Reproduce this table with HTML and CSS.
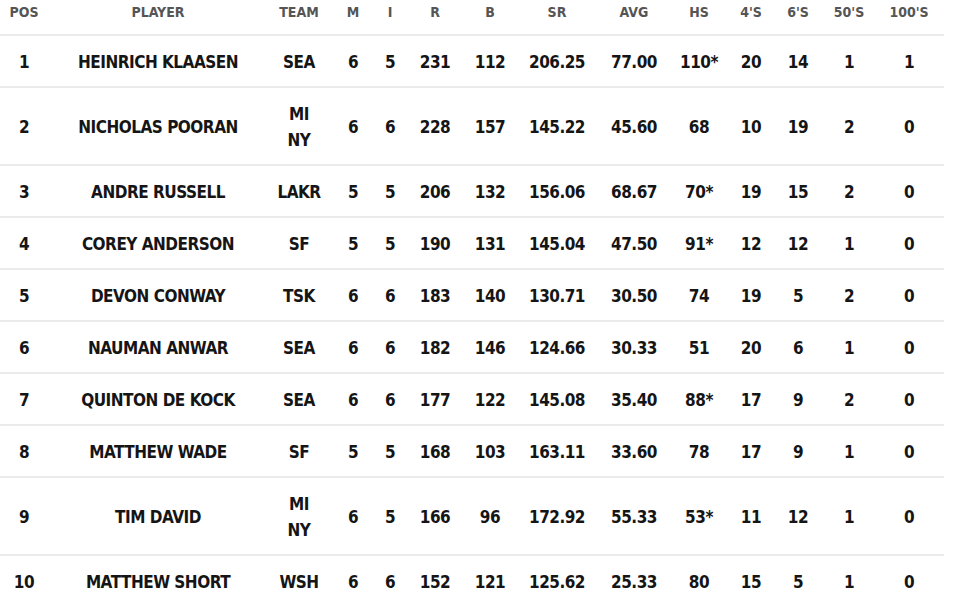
FILE: index.html
```html
<!DOCTYPE html>
<html>
<head>
<meta charset="utf-8">
<link rel="stylesheet" href="styles.css">
</head>
<body>
<table class="stats">
  <colgroup>
    <col class="c-pos"><col class="c-player"><col class="c-team"><col class="c-m"><col class="c-i"><col class="c-r"><col class="c-b"><col class="c-sr"><col class="c-avg"><col class="c-hs"><col class="c-4s"><col class="c-6s"><col class="c-50s"><col class="c-100s">
  </colgroup>
  <thead>
    <tr><th>POS</th><th>PLAYER</th><th>TEAM</th><th>M</th><th>I</th><th>R</th><th>B</th><th>SR</th><th>AVG</th><th>HS</th><th>4'S</th><th>6'S</th><th>50'S</th><th>100'S</th></tr>
  </thead>
  <tbody>
    <tr><td>1</td><td>HEINRICH KLAASEN</td><td>SEA</td><td>6</td><td>5</td><td>231</td><td>112</td><td>206.25</td><td>77.00</td><td>110*</td><td>20</td><td>14</td><td>1</td><td>1</td></tr>
    <tr><td>2</td><td>NICHOLAS POORAN</td><td>MI<br>NY</td><td>6</td><td>6</td><td>228</td><td>157</td><td>145.22</td><td>45.60</td><td>68</td><td>10</td><td>19</td><td>2</td><td>0</td></tr>
    <tr><td>3</td><td>ANDRE RUSSELL</td><td>LAKR</td><td>5</td><td>5</td><td>206</td><td>132</td><td>156.06</td><td>68.67</td><td>70*</td><td>19</td><td>15</td><td>2</td><td>0</td></tr>
    <tr><td>4</td><td>COREY ANDERSON</td><td>SF</td><td>5</td><td>5</td><td>190</td><td>131</td><td>145.04</td><td>47.50</td><td>91*</td><td>12</td><td>12</td><td>1</td><td>0</td></tr>
    <tr><td>5</td><td>DEVON CONWAY</td><td>TSK</td><td>6</td><td>6</td><td>183</td><td>140</td><td>130.71</td><td>30.50</td><td>74</td><td>19</td><td>5</td><td>2</td><td>0</td></tr>
    <tr><td>6</td><td>NAUMAN ANWAR</td><td>SEA</td><td>6</td><td>6</td><td>182</td><td>146</td><td>124.66</td><td>30.33</td><td>51</td><td>20</td><td>6</td><td>1</td><td>0</td></tr>
    <tr><td>7</td><td>QUINTON DE KOCK</td><td>SEA</td><td>6</td><td>6</td><td>177</td><td>122</td><td>145.08</td><td>35.40</td><td>88*</td><td>17</td><td>9</td><td>2</td><td>0</td></tr>
    <tr><td>8</td><td>MATTHEW WADE</td><td>SF</td><td>5</td><td>5</td><td>168</td><td>103</td><td>163.11</td><td>33.60</td><td>78</td><td>17</td><td>9</td><td>1</td><td>0</td></tr>
    <tr><td>9</td><td>TIM DAVID</td><td>MI<br>NY</td><td>6</td><td>5</td><td>166</td><td>96</td><td>172.92</td><td>55.33</td><td>53*</td><td>11</td><td>12</td><td>1</td><td>0</td></tr>
    <tr><td>10</td><td>MATTHEW SHORT</td><td>WSH</td><td>6</td><td>6</td><td>152</td><td>121</td><td>125.62</td><td>25.33</td><td>80</td><td>15</td><td>5</td><td>1</td><td>0</td></tr>
  </tbody>
</table>
</body>
</html>
```

FILE: styles.css
```css
html, body {
  margin: 0;
  padding: 0;
  background: #ffffff;
}
.stats {
  border-collapse: collapse;
  table-layout: fixed;
  width: 944px;
  font-family: "DejaVu Sans Condensed", "DejaVu Sans", sans-serif;
  font-weight: bold;
}
.c-pos { width: 48px; }
.c-player { width: 220px; }
.c-team { width: 62px; }
.c-m { width: 46px; }
.c-i { width: 28px; }
.c-r { width: 62px; }
.c-b { width: 48px; }
.c-sr { width: 86px; }
.c-avg { width: 68px; }
.c-hs { width: 62px; }
.c-4s { width: 42px; }
.c-6s { width: 52px; }
.c-50s { width: 50px; }
.c-100s { width: 70px; }
.stats th {
  padding: 0 0 10px 0;
  height: 23px;
  line-height: 24px;
  font-size: 14px;
  color: #555555;
  text-align: center;
  vertical-align: middle;
  border-bottom: 2px solid #ebebeb;
}
.stats td {
  padding: 13px 0 11px 0;
  line-height: 26px;
  font-size: 17px;
  letter-spacing: -0.5px;
  color: #151515;
  text-align: center;
  vertical-align: middle;
  border-bottom: 2px solid #ebebeb;
  white-space: nowrap;
}
```
